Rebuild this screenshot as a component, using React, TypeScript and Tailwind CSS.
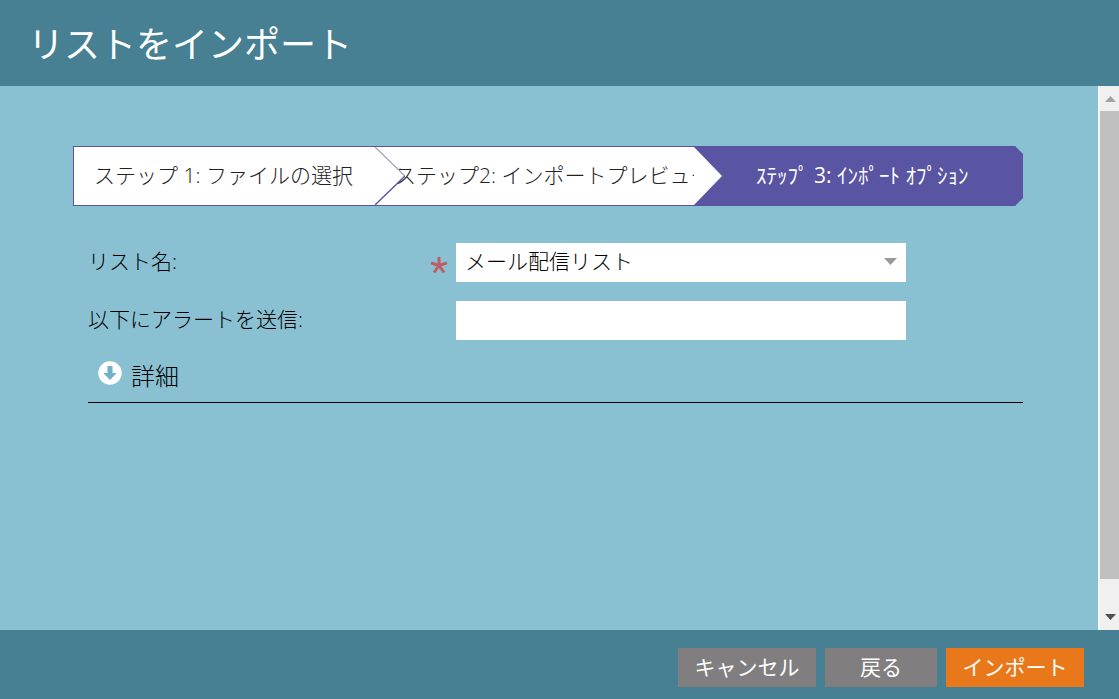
import { useState } from "react";
import type { ReactNode } from "react";
import { clsx } from "clsx";

function Chevron() {
  return (
    <svg
      viewBox="0 0 28 58"
      preserveAspectRatio="none"
      className="absolute top-0 left-full z-10 h-full w-7"
      aria-hidden="true"
    >
      <path d="M0 0L28 29L0 58Z" fill="#fff" />
    </svg>
  );
}

function ChevronLines() {
  return (
    <svg
      viewBox="0 0 30 58"
      preserveAspectRatio="none"
      className="absolute top-0 left-full z-10 h-full w-[30px]"
      fill="none"
      aria-hidden="true"
    >
      <path d="M0 0L30 29" stroke="#9c98b8" strokeWidth="1.2" />
      <path d="M30 29L0 58" stroke="#5a55a3" strokeWidth="1.4" />
    </svg>
  );
}

function DownCircleIcon() {
  return (
    <svg viewBox="0 0 24 24" className="h-6 w-6" aria-hidden="true">
      <circle cx="12" cy="12" r="11.7" fill="#fff" />
      <path d="M9.500 5h5v7h4.200L12 19l-6.700-7h4.200z" fill="#6fb1c6" />
    </svg>
  );
}

function RequiredMark() {
  return (
    <svg viewBox="0 0 18 18" className="mt-1 h-[18px] w-[18px]" role="img" aria-label="必須">
      <path
        d="M9 9.5V1M9 9.5L1 6.8M9 9.5L17 6.8M9 9.5L4 16.5M9 9.5L14 16.5"
        stroke="#c25b63"
        strokeWidth="3"
        fill="none"
      />
    </svg>
  );
}

interface FooterButtonProps {
  children: ReactNode;
  className: string;
}

function FooterButton({ children, className }: FooterButtonProps) {
  return (
    <button type="button" className={clsx("h-[39px] text-[21px] leading-[39px] text-white", className)}>
      {children}
    </button>
  );
}

function Steps() {
  return (
    <ol className="grid h-[60px] grid-cols-[302fr_319fr_329fr] text-[21px] leading-[56px] font-light text-[#222]">
      <li className="relative min-w-0 border-y border-l border-[#5a55a3] bg-white pl-5 whitespace-nowrap">
        ステップ 1: ファイルの選択
        <ChevronLines />
      </li>
      <li className="relative min-w-0 border-y border-[#5a55a3] bg-white pl-5">
        <div className="overflow-hidden whitespace-nowrap">ステップ2: インポートプレビュー</div>
        <Chevron />
      </li>
      <li
        aria-current="step"
        className="min-w-0 border-y border-[#5a55a3] bg-[#5a55a3] pl-[62px] font-normal whitespace-nowrap text-white [clip-path:polygon(0_0,calc(100%-8px)_0,100%_8px,100%_calc(100%-8px),calc(100%-8px)_100%,0_100%)]"
      >
        ｽﾃｯﾌﾟ 3: ｲﾝﾎﾟｰﾄ ｵﾌﾟｼｮﾝ
      </li>
    </ol>
  );
}

function Scrollbar() {
  return (
    <div className="flex w-[21px] shrink-0 flex-col border-l-2 border-[#f8f8f8] bg-[#f0f0f0]" aria-hidden="true">
      <svg viewBox="0 0 19 25" className="h-[25px] w-[19px]">
        <path d="M5 16L10.500 10L16 16Z" fill="#a3a3a3" />
      </svg>
      <div className="flex-1 bg-[#c0c0c0]" />
      <svg viewBox="0 0 19 51" className="h-[51px] w-[19px]">
        <path d="M5 35L10.500 41L16 35Z" fill="#505050" />
      </svg>
    </div>
  );
}

export default function App() {
  const [listName, setListName] = useState("メール配信リスト");
  const [alertTo, setAlertTo] = useState("");

  return (
    <div className="flex min-h-screen flex-col bg-[#89c1d2] font-['Open_Sans','Noto_Sans_CJK_JP',sans-serif]" lang="ja">
      <header className="flex h-[86px] items-center bg-[#468092] px-7 pt-1">
        <h1 className="text-[36px] leading-[48px] text-white">リストをインポート</h1>
      </header>

      <div className="flex flex-1">
        <main className="min-w-0 flex-1 pt-[60px] pr-[75px] pl-[73px]">
          <Steps />

          <form className="pt-[37px] pl-[15px] text-[21px] text-black">
            <div className="grid grid-cols-[342px_26px_450px] gap-y-[19px] leading-[37px] font-light">
              <label htmlFor="list-name">リスト名:</label>
              <div className="flex items-center">
                <RequiredMark />
              </div>
              <div className="relative">
                <select
                  id="list-name"
                  required
                  value={listName}
                  onChange={(e) => setListName(e.target.value)}
                  className="block h-[39px] w-full appearance-none bg-white pr-10 pb-[2px] pl-[9px] font-light"
                >
                  <option>メール配信リスト</option>
                </select>
                <svg
                  viewBox="0 0 13 7"
                  className="pointer-events-none absolute top-[15px] right-[9px] h-[7px] w-[13px]"
                  aria-hidden="true"
                >
                  <path d="M0 0H13L6.500 7Z" fill="#999" />
                </svg>
              </div>

              <label htmlFor="alert-to" className="col-span-2">
                以下にアラートを送信:
              </label>
              <input
                id="alert-to"
                type="text"
                value={alertTo}
                onChange={(e) => setAlertTo(e.target.value)}
                className="h-[39px] w-full bg-white px-[9px]"
              />
            </div>

            <div className="mt-[17px] border-b border-black pb-[9px] pl-[10px]">
              <button type="button" className="flex h-9 gap-[9px] text-[24px] leading-[38px] font-light">
                <span className="pt-1">
                  <DownCircleIcon />
                </span>
                詳細
              </button>
            </div>
          </form>
        </main>
        <Scrollbar />
      </div>

      <footer className="flex h-[69px] justify-end gap-[9px] bg-[#468092] pt-[18px] pr-[35px]">
        <FooterButton className="w-[138px] bg-[#807e7f]">キャンセル</FooterButton>
        <FooterButton className="w-[112px] bg-[#807e7f]">戻る</FooterButton>
        <FooterButton className="w-[138px] bg-[#e9781a]">インポート</FooterButton>
      </footer>
    </div>
  );
}
